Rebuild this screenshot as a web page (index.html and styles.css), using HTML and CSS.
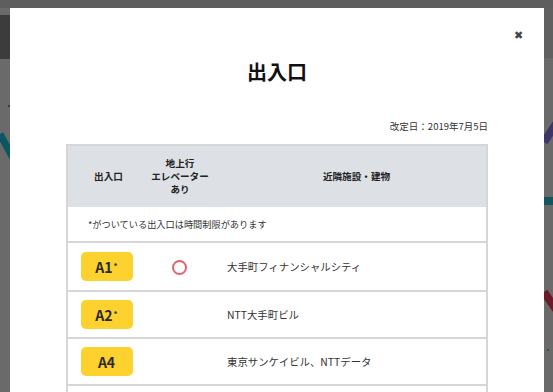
FILE: index.html
```html
<!DOCTYPE html>
<html lang="ja">
<head>
    <meta charset="UTF-8">
    <title>出入口</title>
    <link rel="stylesheet" href="styles.css">
</head>
<body>
    <svg class="map" width="553" height="392" viewBox="0 0 553 392">
        <rect x="0" y="0" width="553" height="392" fill="#6a6a6a"/>
        <rect x="0" y="0" width="553" height="8" fill="#5e5e5e"/>
        <rect x="0" y="15" width="10" height="44" fill="#3c3c3c"/>
        <rect x="544" y="8" width="9" height="50" fill="#606060"/>
        <line x1="0" y1="134" x2="14" y2="160" stroke="#0c5664" stroke-width="7"/>
        <line x1="8" y1="106" x2="12" y2="106" stroke="#3b3466" stroke-width="2"/>
        <line x1="544" y1="142" x2="560" y2="118" stroke="#3d3567" stroke-width="8"/>
        <rect x="544" y="197" width="9" height="8" fill="#12545f"/>
        <line x1="544" y1="292" x2="560" y2="315" stroke="#6b1a27" stroke-width="8"/>
        <rect x="547" y="349" width="2" height="2" fill="#1f5a4a"/>
    </svg>

    <div class="modal">
        <span class="modal-close">✖</span>
        <h1 class="modal-title">出入口</h1>
        <p class="revised">改定日：2019年7月5日</p>

        <table class="exits">
            <thead>
                <tr>
                    <th class="col-exit">出入口</th>
                    <th class="col-elev">地上行<br>エレベーター<br>あり</th>
                    <th class="col-near">近隣施設・建物</th>
                </tr>
            </thead>
            <tbody>
                <tr class="note">
                    <td colspan="3">*がついている出入口は時間制限があります</td>
                </tr>
                <tr class="first">
                    <td class="col-exit"><span class="badge">A1<sup>*</sup></span></td>
                    <td class="col-elev"><span class="mark"></span></td>
                    <td class="col-near">大手町フィナンシャルシティ</td>
                </tr>
                <tr>
                    <td class="col-exit"><span class="badge">A2<sup>*</sup></span></td>
                    <td class="col-elev"></td>
                    <td class="col-near">NTT大手町ビル</td>
                </tr>
                <tr>
                    <td class="col-exit"><span class="badge">A4</span></td>
                    <td class="col-elev"></td>
                    <td class="col-near">東京サンケイビル、NTTデータ</td>
                </tr>
                <tr class="empty">
                    <td colspan="3"></td>
                </tr>
            </tbody>
        </table>
    </div>
</body>
</html>
```

FILE: styles.css
```css
body {
    margin: 0;
    width: 553px;
    height: 392px;
    overflow: hidden;
    background-color: #6a6a6a;
    font-family: "Noto Sans CJK JP", "Noto Sans", sans-serif;
    color: #333;
}
.map {
    position: absolute;
    left: 0;
    top: 0;
}
.modal {
    position: absolute;
    left: 10px;
    top: 8px;
    width: 534px;
    height: 420px;
    box-sizing: border-box;
    padding: 0 56px;
    background-color: white;
}
.modal-close {
    position: absolute;
    right: 21px;
    top: 18px;
    font-size: 11px;
    color: #444;
}
.modal-title {
    margin: 49px 0 0;
    font-size: 20px;
    line-height: 30px;
    text-align: center;
    color: #111;
}
.revised {
    margin: 32px 0 0;
    font-size: 9.5px;
    line-height: 14px;
    text-align: right;
}
.exits {
    margin-top: 11px;
    width: 100%;
    border-collapse: collapse;
    table-layout: fixed;
    border: 2px solid #d6d6d6;
    border-bottom: none;
}
.exits th {
    height: 61px;
    padding: 0;
    background-color: #dde1e5;
    font-size: 9.6px;
    line-height: 13px;
    font-weight: bold;
    color: #222;
}
.exits td {
    height: 45px;
    padding: 0;
    border-top: 2px solid #d6d6d6;
    font-size: 10.4px;
}
.exits .first td {
    height: 47px;
}
.col-exit {
    width: 81px;
    text-align: center;
}
.col-elev {
    width: 62px;
    text-align: center;
}
.exits .col-near {
    padding-left: 16px;
}
.exits .note td {
    height: 34px;
    border-top: none;
    padding-left: 20px;
    font-size: 9.2px;
}
.badge {
    display: inline-flex;
    align-items: center;
    justify-content: center;
    width: 52px;
    height: 29px;
    margin-left: -4px;
    border-radius: 5px;
    background-color: #fdd12e;
    font-size: 14px;
    font-weight: bold;
    color: #2a2a2a;
}
.badge sup {
    font-size: 8px;
    margin-left: 1px;
    position: relative;
    top: -1px;
}
.mark {
    display: inline-block;
    width: 11px;
    height: 11px;
    margin-left: -2px;
    border: 2px solid #e2646a;
    border-radius: 50%;
    vertical-align: middle;
}
```
